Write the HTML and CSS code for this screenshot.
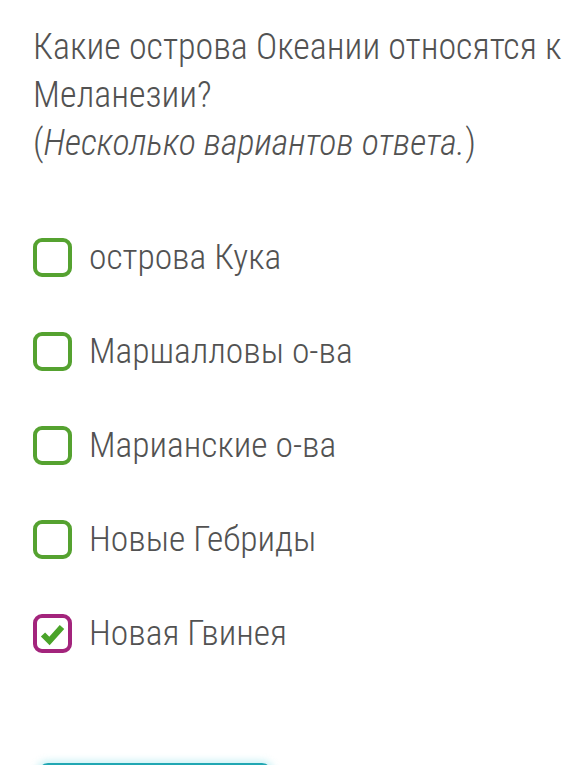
FILE: index.html
```html
<!DOCTYPE html>
<html lang="ru">
<head>
<meta charset="utf-8">
<link rel="stylesheet" href="styles.css">
</head>
<body>
<div class="quiz">
  <p class="question">Какие острова Океании относятся к<br>Меланезии?<br>(<i>Несколько вариантов ответа.</i>)</p>
  <ul class="options">
    <li class="option"><span class="box"></span><span class="label">острова Кука</span></li>
    <li class="option"><span class="box"></span><span class="label">Маршалловы о-ва</span></li>
    <li class="option"><span class="box"></span><span class="label">Марианские о-ва</span></li>
    <li class="option"><span class="box"></span><span class="label">Новые Гебриды</span></li>
    <li class="option"><span class="box box-checked"><svg viewBox="0 0 39 39" width="39" height="39"><polyline points="10,20.5 16.5,27 29,13" fill="none" stroke="#4aa329" stroke-width="6" stroke-linecap="butt" stroke-linejoin="miter"/></svg></span><span class="label">Новая Гвинея</span></li>
  </ul>
  <div class="button"></div>
</div>
</body>
</html>
```

FILE: styles.css
```css
html, body {
  margin: 0;
  padding: 0;
  background: #ffffff;
}
body {
  font-family: "Roboto Condensed", Roboto, "Liberation Sans", sans-serif;
  color: #525252;
  overflow: hidden;
}
.quiz {
  padding: 23px 0 0 33px;
}
.question {
  margin: 0;
  font-size: 36px;
  line-height: 48px;
  font-weight: 300;
  white-space: nowrap;
}
.question i {
  font-style: italic;
}
.options {
  list-style: none;
  margin: 43px 0 0 0;
  padding: 0;
}
.option {
  height: 94px;
  display: flex;
  align-items: center;
  gap: 17px;
}
.box {
  width: 39px;
  height: 39px;
  box-sizing: border-box;
  border: 4px solid #55a230;
  border-radius: 9px;
  flex: none;
  position: relative;
}
.box-checked {
  border-color: #a3247c;
}
.box-checked svg {
  position: absolute;
  left: -4px;
  top: -4px;
}
.label {
  font-size: 35.5px;
  font-weight: 300;
  line-height: 40px;
}
.button {
  margin: 83px 0 0 5px;
  width: 234px;
  height: 48px;
  border-radius: 10px;
  background: #21a7b3;
  box-shadow: 0 0 6px 3px rgba(120, 220, 230, 0.35);
}
```
